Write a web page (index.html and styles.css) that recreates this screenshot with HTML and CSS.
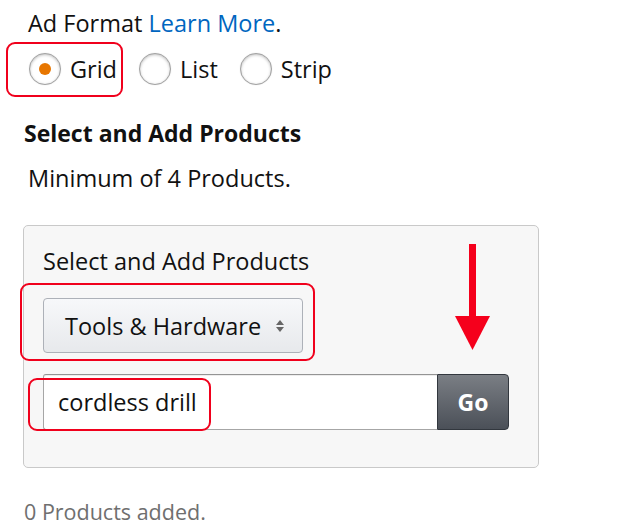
FILE: index.html
```html
<!DOCTYPE html>
<html>
<head>
<meta charset="utf-8">
<link rel="stylesheet" href="styles.css">
</head>
<body>
<div class="page">
  <div class="format-label">Ad Format <a class="link" href="#">Learn More</a>.</div>
  <div class="radios">
    <span class="mark mark-grid"></span>
    <label class="radio"><span class="circle checked"><span class="dot"></span></span>Grid</label>
    <label class="radio"><span class="circle"></span>List</label>
    <label class="radio"><span class="circle"></span>Strip</label>
  </div>
  <h2 class="heading">Select and Add Products</h2>
  <div class="minimum">Minimum of 4 Products.</div>
  <div class="panel">
    <svg class="arrow" width="40" height="110" viewBox="0 0 40 110">
      <rect x="15" y="0" width="7" height="76" fill="#f5001c"/>
      <polygon points="1,72 36,72 18.5,106" fill="#f5001c"/>
    </svg>
    <div class="panel-title">Select and Add Products</div>
    <div class="select-wrap">
      <span class="mark mark-select"></span>
      <div class="select">
        <span>Tools &amp; Hardware</span>
        <svg class="updown" width="10" height="14" viewBox="0 0 10 14">
          <polygon points="1,6 9,6 5,1" fill="#666"/>
          <polygon points="1,8 9,8 5,13" fill="#666"/>
        </svg>
      </div>
    </div>
    <div class="search">
      <span class="mark mark-input"></span>
      <div class="input">cordless drill</div>
      <button class="go">Go</button>
    </div>
  </div>
  <div class="added">0 Products added.</div>
</div>
</body>
</html>
```
FILE: styles.css
```css
html, body {
  margin: 0;
  padding: 0;
  background: #fff;
}
body {
  font-family: "Open Sans", "Noto Sans", sans-serif;
  color: #111;
}
.page {
  padding: 8px 0 0 24px;
  width: 515px;
}
.format-label {
  font-size: 23.5px;
  line-height: 30px;
  margin-left: 4px;
}
.link {
  color: #0066c0;
  text-decoration: none;
}
.radios {
  position: relative;
  display: flex;
  align-items: center;
  height: 44px;
  margin-top: 9px;
  margin-left: 5px;
}
.radio {
  display: flex;
  align-items: center;
  font-size: 23.5px;
  margin-right: 22px;
}
.circle {
  width: 32px;
  height: 32px;
  box-sizing: border-box;
  border-radius: 50%;
  border: 1px solid #a2a2a2;
  background: #fff;
  box-shadow: inset 0 1px 3px rgba(0,0,0,0.25), 0 0 1px rgba(0,0,0,0.2);
  display: flex;
  align-items: center;
  justify-content: center;
  margin-right: 9px;
}
.dot {
  width: 12px;
  height: 12px;
  border-radius: 50%;
  background: #e77600;
}
.mark {
  position: absolute;
  border: 2px solid #f0001c;
  border-radius: 9px;
  box-sizing: border-box;
}
.mark-grid {
  left: -23px;
  top: -5px;
  width: 117px;
  height: 55px;
}
.heading {
  font-size: 23px;
  font-weight: 700;
  line-height: 30px;
  margin: 27px 0 0 0;
}
.minimum {
  font-size: 23.5px;
  line-height: 30px;
  margin: 15px 0 0 4px;
}
.panel {
  position: relative;
  margin: 32px 0 0 -1px;
  width: 516px;
  box-sizing: border-box;
  background: #f7f7f7;
  border: 1px solid #c9c9c9;
  border-radius: 5px;
  padding: 20px 19px 37px 19px;
}
.arrow {
  position: absolute;
  left: 430px;
  top: 18px;
}
.panel-title {
  font-size: 23.5px;
  line-height: 30px;
}
.select-wrap {
  position: relative;
  margin-top: 22px;
}
.mark-select {
  left: -23px;
  top: -15px;
  width: 295px;
  height: 78px;
}
.select {
  width: 260px;
  height: 55px;
  box-sizing: border-box;
  border: 1px solid #adb1b8;
  border-radius: 4px;
  background: linear-gradient(#f7f8fa, #e7e9ec);
  display: flex;
  align-items: center;
  justify-content: space-between;
  padding: 0 17px 0 21px;
  font-size: 23.5px;
}
.search {
  position: relative;
  display: flex;
  margin-top: 21px;
}
.mark-input {
  left: -15px;
  top: 4px;
  width: 183px;
  height: 53px;
}
.input {
  width: 394px;
  height: 56px;
  box-sizing: border-box;
  background: #fff;
  border: 1px solid #a6a6a6;
  border-top-color: #949494;
  border-right: none;
  border-radius: 3px 0 0 3px;
  box-shadow: inset 0 1px 0 rgba(0,0,0,0.07);
  font-size: 23.5px;
  line-height: 54px;
  padding-left: 14px;
}
.go {
  width: 72px;
  height: 56px;
  box-sizing: border-box;
  border: 1px solid #32373e;
  border-radius: 0 4px 4px 0;
  background: linear-gradient(#7a7e84, #4b5058);
  color: #fff;
  font-family: "Open Sans", "Noto Sans", sans-serif;
  font-weight: 700;
  font-size: 23px;
  padding: 0;
}
.added {
  font-size: 21.5px;
  line-height: 28px;
  color: #6f6f6f;
  margin-top: 30px;
}
```
